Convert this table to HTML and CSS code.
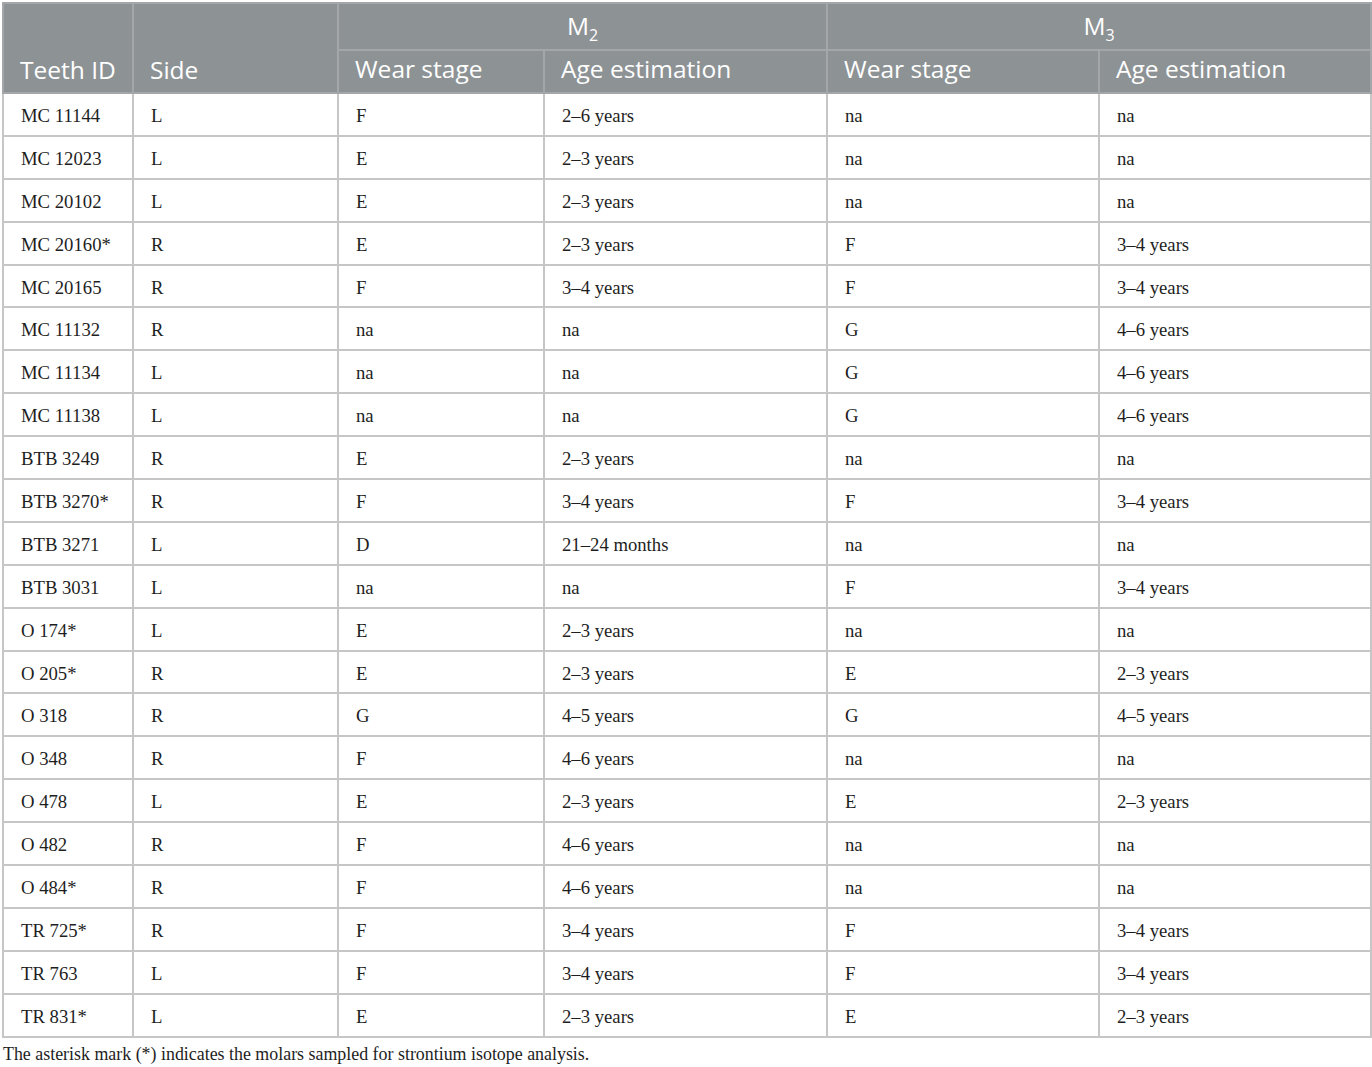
FILE: index.html
```html
<!DOCTYPE html>
<html>
<head>
<meta charset="utf-8">
<link rel="stylesheet" href="styles.css">
</head>
<body>
<div class="wrap">
<table class="data">
<colgroup>
<col class="c1"><col class="c2"><col class="c3"><col class="c4"><col class="c5"><col class="c6">
</colgroup>
<thead>
<tr class="h1">
<th rowspan="2" class="bottom">Teeth ID</th>
<th rowspan="2" class="bottom">Side</th>
<th colspan="2" class="center">M<sub>2</sub></th>
<th colspan="2" class="center">M<sub>3</sub></th>
</tr>
<tr class="h2">
<th>Wear stage</th><th>Age estimation</th><th>Wear stage</th><th>Age estimation</th>
</tr>
</thead>
<tbody>
<tr><td>MC 11144</td><td>L</td><td>F</td><td>2–6 years</td><td>na</td><td>na</td></tr>
<tr><td>MC 12023</td><td>L</td><td>E</td><td>2–3 years</td><td>na</td><td>na</td></tr>
<tr><td>MC 20102</td><td>L</td><td>E</td><td>2–3 years</td><td>na</td><td>na</td></tr>
<tr><td>MC 20160*</td><td>R</td><td>E</td><td>2–3 years</td><td>F</td><td>3–4 years</td></tr>
<tr><td>MC 20165</td><td>R</td><td>F</td><td>3–4 years</td><td>F</td><td>3–4 years</td></tr>
<tr><td>MC 11132</td><td>R</td><td>na</td><td>na</td><td>G</td><td>4–6 years</td></tr>
<tr><td>MC 11134</td><td>L</td><td>na</td><td>na</td><td>G</td><td>4–6 years</td></tr>
<tr><td>MC 11138</td><td>L</td><td>na</td><td>na</td><td>G</td><td>4–6 years</td></tr>
<tr><td>BTB 3249</td><td>R</td><td>E</td><td>2–3 years</td><td>na</td><td>na</td></tr>
<tr><td>BTB 3270*</td><td>R</td><td>F</td><td>3–4 years</td><td>F</td><td>3–4 years</td></tr>
<tr><td>BTB 3271</td><td>L</td><td>D</td><td>21–24 months</td><td>na</td><td>na</td></tr>
<tr><td>BTB 3031</td><td>L</td><td>na</td><td>na</td><td>F</td><td>3–4 years</td></tr>
<tr><td>O 174*</td><td>L</td><td>E</td><td>2–3 years</td><td>na</td><td>na</td></tr>
<tr><td>O 205*</td><td>R</td><td>E</td><td>2–3 years</td><td>E</td><td>2–3 years</td></tr>
<tr><td>O 318</td><td>R</td><td>G</td><td>4–5 years</td><td>G</td><td>4–5 years</td></tr>
<tr><td>O 348</td><td>R</td><td>F</td><td>4–6 years</td><td>na</td><td>na</td></tr>
<tr><td>O 478</td><td>L</td><td>E</td><td>2–3 years</td><td>E</td><td>2–3 years</td></tr>
<tr><td>O 482</td><td>R</td><td>F</td><td>4–6 years</td><td>na</td><td>na</td></tr>
<tr><td>O 484*</td><td>R</td><td>F</td><td>4–6 years</td><td>na</td><td>na</td></tr>
<tr><td>TR 725*</td><td>R</td><td>F</td><td>3–4 years</td><td>F</td><td>3–4 years</td></tr>
<tr><td>TR 763</td><td>L</td><td>F</td><td>3–4 years</td><td>F</td><td>3–4 years</td></tr>
<tr><td>TR 831*</td><td>L</td><td>E</td><td>2–3 years</td><td>E</td><td>2–3 years</td></tr>
</tbody>
</table>
<p class="note">The asterisk mark (*) indicates the molars sampled for strontium isotope analysis.</p>
</div>
</body>
</html>
```
FILE: styles.css
```css
html, body {
  margin: 0;
  padding: 0;
  background: #ffffff;
}
.wrap {
  padding: 2px 2px 0 2px;
}
.data {
  border-collapse: collapse;
  table-layout: fixed;
  width: 1368px;
  border: 2px solid #c6c6c6;
}
.c1 { width: 130px; }
.c2 { width: 205px; }
.c3 { width: 206px; }
.c4 { width: 283px; }
.c5 { width: 272px; }
.c6 { width: 272px; }
.data th {
  background: #8d9295;
  color: #ffffff;
  font-family: "Open Sans", "Liberation Sans", sans-serif;
  font-weight: 400;
  font-size: 24.5px;
  text-align: left;
  padding: 0 0 0 16px;
  border: 2px solid #a3a7a9;
  line-height: 26px;
}
.data thead tr.h2 th { vertical-align: top; padding-top: 5px; padding-bottom: 10px; }
.data th.bottom { vertical-align: bottom; padding-bottom: 9px; }
.data th.center { text-align: center; padding-left: 0; vertical-align: top; padding-top: 9px; padding-bottom: 10px; }
.data th sub {
  font-size: 16px;
  position: relative;
  top: 6px;
  vertical-align: baseline;
  line-height: 0;
}
.data td {
  font-family: "Liberation Serif", "Times New Roman", serif;
  font-size: 18.7px;
  line-height: 22px;
  color: #1e1e1e;
  padding: 11px 0 7.9px 17px;
  border: 2px solid #c6c6c6;
  vertical-align: middle;
}
.note {
  margin: 6px 0 0 1px;
  font-family: "Liberation Serif", "Times New Roman", serif;
  font-size: 17.9px;
  color: #1e1e1e;
}
```
